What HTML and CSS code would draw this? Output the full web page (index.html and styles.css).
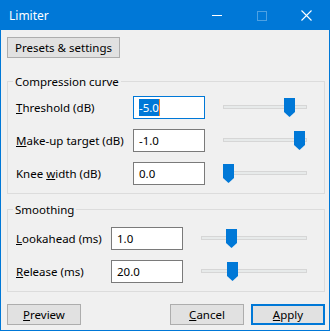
FILE: index.html
```html
<!DOCTYPE html>
<html lang="en">
<head>
    <meta charset="UTF-8">
    <title>Limiter</title>
    <link rel="stylesheet" href="styles.css">
</head>
<body>
    <div class="window">
        <div class="titlebar">
            <span class="title">Limiter</span>
            <span class="cap-btn">
                <svg width="10" height="10" viewBox="0 0 10 10"><line x1="0" y1="4.5" x2="10" y2="4.5" stroke="#fff" stroke-width="1"/></svg>
            </span>
            <span class="cap-btn disabled">
                <svg width="10" height="10" viewBox="0 0 10 10"><rect x="0.5" y="0.5" width="9" height="9" fill="none" stroke="#fff" stroke-width="1"/></svg>
            </span>
            <span class="cap-btn">
                <svg width="11" height="11" viewBox="0 0 11 11"><path d="M0.5 0.5 L10.5 10.5 M10.5 0.5 L0.5 10.5" stroke="#fff" stroke-width="1.1"/></svg>
            </span>
        </div>

        <div class="content">
            <button class="btn presets">Presets &amp; settings</button>

            <fieldset class="group curve">
                <legend>Compression curve</legend>
                <div class="row">
                    <label><u>T</u>hreshold (dB)</label>
                    <div class="field focused"><span class="sel">-5.0</span><span class="caret"></span></div>
                    <div class="slider"><div class="track"></div><span class="thumb" style="left: 61px"></span></div>
                </div>
                <div class="row">
                    <label><u>M</u>ake-up target (dB)</label>
                    <div class="field">-1.0</div>
                    <div class="slider"><div class="track"></div><span class="thumb" style="left: 71px"></span></div>
                </div>
                <div class="row">
                    <label>Knee <u>w</u>idth (dB)</label>
                    <div class="field">0.0</div>
                    <div class="slider"><div class="track"></div><span class="thumb" style="left: 0px"></span></div>
                </div>
            </fieldset>

            <fieldset class="group smoothing">
                <legend>Smoothing</legend>
                <div class="row">
                    <label><u>L</u>ookahead (ms)</label>
                    <div class="field">1.0</div>
                    <div class="slider"><div class="track"></div><span class="thumb" style="left: 25px"></span></div>
                </div>
                <div class="row">
                    <label><u>R</u>elease (ms)</label>
                    <div class="field">20.0</div>
                    <div class="slider"><div class="track"></div><span class="thumb" style="left: 26px"></span></div>
                </div>
            </fieldset>

            <div class="actions">
                <button class="btn preview"><u>P</u>review</button>
                <button class="btn"><u>C</u>ancel</button>
                <button class="btn default"><u>A</u>pply</button>
            </div>
        </div>
    </div>
</body>
</html>
```

FILE: styles.css
```css
body {
    margin: 0;
    background: #ffffff;
    font-family: "Noto Sans", "DejaVu Sans", sans-serif;
    font-size: 11.5px;
    color: #000;
}

.window {
    width: 330px;
    height: 331px;
    box-sizing: border-box;
    border: 1px solid #0078d7;
    background: #f0f0f0;
    display: flex;
    flex-direction: column;
}

/* barra de titulo */
.titlebar {
    height: 29px;
    background: #0078d7;
    color: #fff;
    display: flex;
    align-items: center;
    flex-shrink: 0;
    font-size: 12px;
}

.title {
    flex: 1;
    padding-left: 8px;
}

.cap-btn {
    width: 45px;
    height: 29px;
    display: flex;
    align-items: center;
    justify-content: center;
}

.cap-btn.disabled svg {
    opacity: 0.3;
}

.content {
    flex: 1;
    display: flex;
    flex-direction: column;
    padding: 7px 4px 0 6px;
}

.btn {
    height: 21px;
    margin: 0;
    padding: 0;
    background: #e1e1e1;
    border: 1px solid #adadad;
    font: inherit;
    color: #000;
}

.presets {
    align-self: flex-start;
    width: 113px;
}

.group {
    margin: 0;
    border: 1px solid #dcdcdc;
    padding: 7px 16px 8px 8px;
    min-width: 0;
}

.group legend {
    margin-left: -3px;
    padding: 0 2px;
    line-height: 15px;
}

.curve {
    margin-top: 16px;
}

.smoothing {
    margin-top: 8px;
    padding-top: 10px;
}

.row {
    display: grid;
    height: 23px;
    align-items: center;
}

.row + .row {
    margin-top: 10px;
}

.curve .row {
    grid-template-columns: 117px 72px 102px;
}

.smoothing .row {
    grid-template-columns: 95px 72px 124px;
}

.field {
    height: 23px;
    box-sizing: border-box;
    border: 1px solid #7a7a7a;
    background: #fff;
    padding-left: 5px;
    display: flex;
    align-items: center;
}

.field.focused {
    border-color: #0078d7;
}

.sel {
    background: #0078d7;
    color: #fff;
    line-height: 17px;
}

.caret {
    width: 1px;
    height: 17px;
    background: #ff8728;
}

/* sliders */
.slider {
    position: relative;
    height: 19px;
    margin-left: 18px;
}

.track {
    margin-top: 7px;
    height: 4px;
    box-sizing: border-box;
    border: 1px solid #d6d6d6;
    background: #e7eaea;
}

.thumb {
    position: absolute;
    top: 0;
    width: 11px;
    height: 19px;
    background: #0078d7;
    clip-path: polygon(0 0, 100% 0, 100% 74%, 50% 100%, 0 74%);
}

.actions {
    display: flex;
    gap: 7px;
    margin-top: 12px;
}

.actions .btn {
    width: 74px;
}

.actions .preview {
    margin-right: auto;
}

.actions .default {
    border: 2px solid #0078d7;
}
```
